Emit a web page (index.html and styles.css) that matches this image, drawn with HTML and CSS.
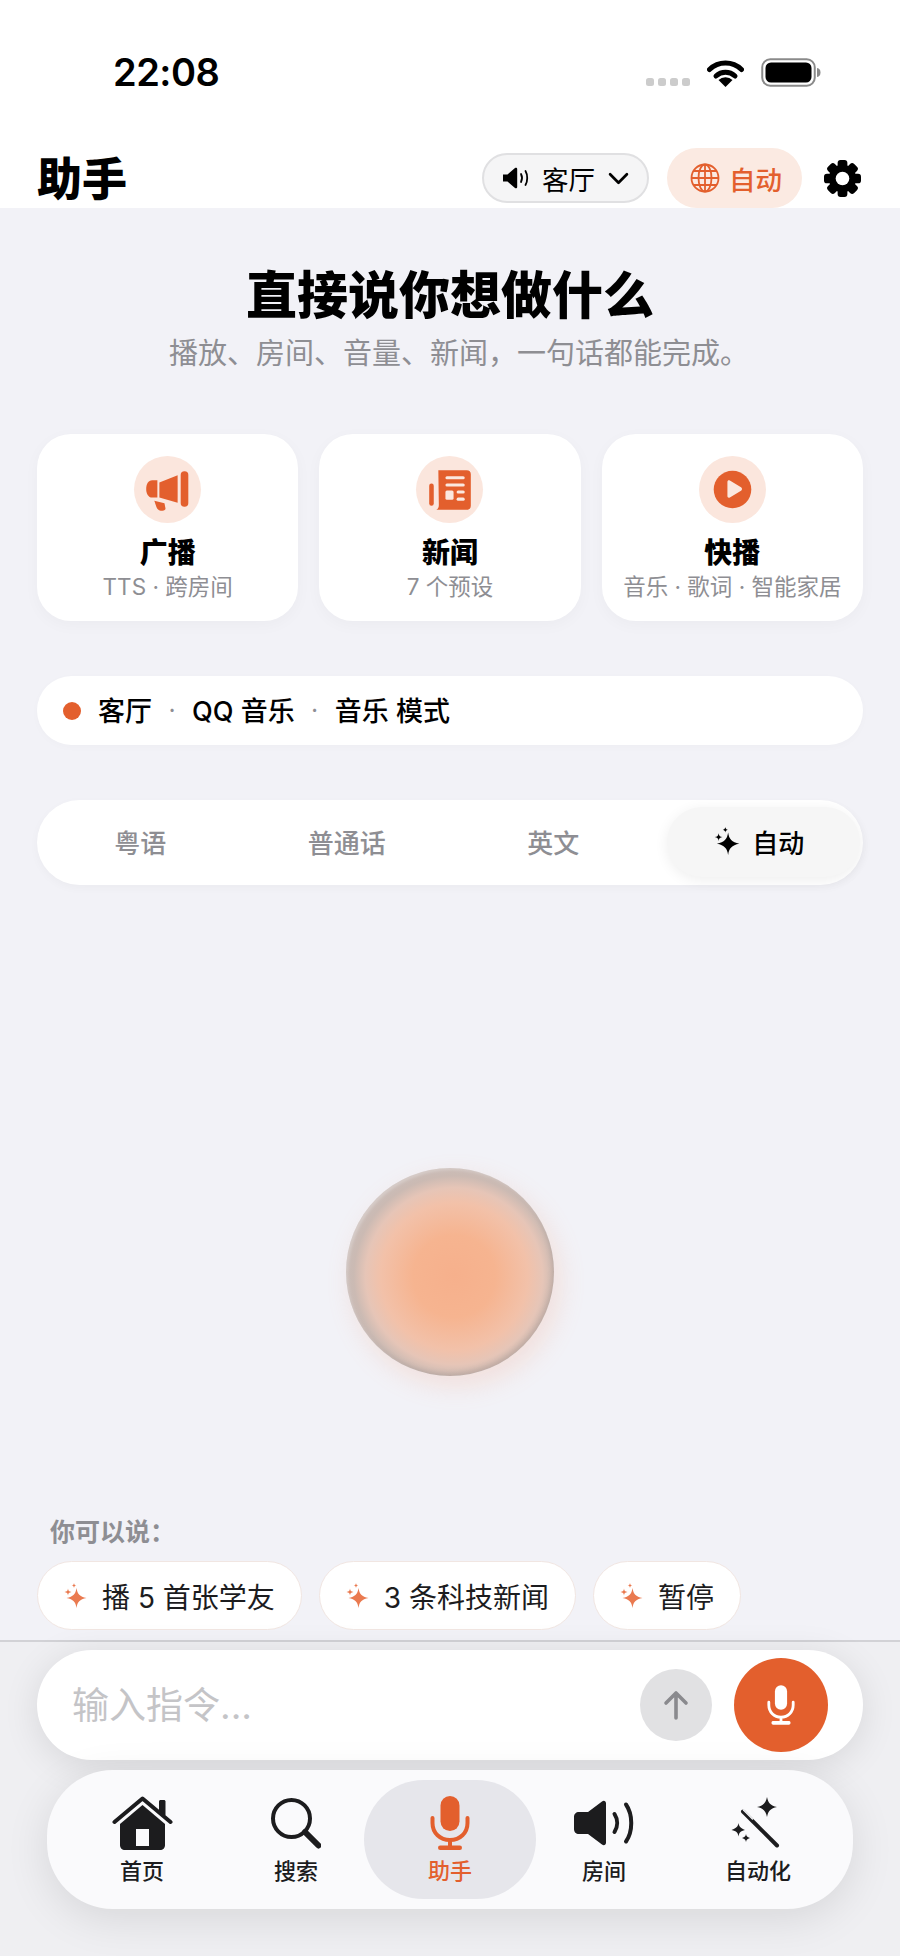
FILE: index.html
```html
<!DOCTYPE html>
<html lang="zh">
<head>
    <meta charset="utf-8">
    <title>助手</title>
    <link rel="stylesheet" href="styles.css">
</head>
<body>
<svg width="0" height="0" class="defs">
    <symbol id="spark" viewBox="0 0 23 25">
        <path d="M12.500 5c.9 6 3.200 8.700 10 10-6.800 1.300-9.100 4-10 10-.9-6-3.200-8.700-10-10 6.800-1.300 9.100-4 10-10z"/>
        <path d="M4 5.500c.3 2.200 1 3 3.500 3.500-2.500.5-3.200 1.300-3.500 3.500-.3-2.200-1-3-3.500-3.500 2.500-.5 3.200-1.300 3.500-3.500z"/>
        <path d="M10 0c.2 1.500.7 2.100 2.300 2.500-1.600.4-2.100 1-2.300 2.500-.2-1.500-.7-2.100-2.300-2.500 1.600-.4 2.100-1 2.300-2.500z"/>
    </symbol>
</svg>
<div class="page">
    <div class="top">
        <div class="status">
            <span class="time">22:08</span>
            <div class="status-icons">
                <span class="dots"><i></i><i></i><i></i><i></i></span>
                <svg class="wifi" viewBox="0 0 37 29">
                    <path d="M2.500 11.500a23 23 0 0 1 32 0" fill="none" stroke="#000" stroke-width="5" stroke-linecap="round"/>
                    <path d="M9 18a14 14 0 0 1 19 0" fill="none" stroke="#000" stroke-width="5" stroke-linecap="round"/>
                    <path d="M18.500 29l-7-7a10 10 0 0 1 14 0z"/>
                </svg>
                <svg class="battery" viewBox="0 0 60 29">
                    <rect x="1.250" y="1.250" width="52.500" height="26.500" rx="8" fill="none" stroke="#8a8a8a" stroke-width="2"/>
                    <rect x="4.500" y="4.500" width="46" height="20" rx="5.500"/>
                    <path d="M56 10c2.500.6 3.500 2 3.500 4.500S58.500 18.400 56 19z" fill="#8a8a8a"/>
                </svg>
            </div>
        </div>
        <header class="header">
            <h1 class="title">助手</h1>
            <button class="room-btn">
                <svg class="room-speaker" viewBox="0 0 28 24">
                    <path d="M1 8.500h4.500L13 2c1-.8 2.200-.2 2.200 1v18c0 1.200-1.200 1.800-2.200 1l-7.500-6.500H1z"/>
                    <path d="M19 8c1.300 2.500 1.300 5.500 0 8M23.500 5c2.300 4 2.300 10 0 14" fill="none" stroke="#000" stroke-width="1.800" stroke-linecap="round"/>
                </svg>
                <span>客厅</span>
                <svg class="chevron" viewBox="0 0 20 12"><path d="M2 2l8 8 8-8" fill="none" stroke="#000" stroke-width="2.600" stroke-linecap="round" stroke-linejoin="round"/></svg>
            </button>
            <button class="lang-btn">
                <svg class="globe" viewBox="0 0 30 30" fill="none" stroke="#e35f2d" stroke-width="1.800">
                    <circle cx="15" cy="15" r="13.500"/>
                    <ellipse cx="15" cy="15" rx="6.500" ry="13.500"/>
                    <path d="M15 1.500v27M1.500 15h27M3.500 8h23M3.500 22h23"/>
                </svg>
                <span>自动</span>
            </button>
            <svg class="gear" viewBox="0 0 38 38">
                <g fill="#000">
                    <rect x="14" y="0" width="10" height="38" rx="3"/>
                    <rect x="14" y="0" width="10" height="38" rx="3" transform="rotate(45 19 19)"/>
                    <rect x="14" y="0" width="10" height="38" rx="3" transform="rotate(90 19 19)"/>
                    <rect x="14" y="0" width="10" height="38" rx="3" transform="rotate(135 19 19)"/>
                </g>
                <circle cx="19" cy="19" r="10.500" fill="none" stroke="#000" stroke-width="7"/>
                <circle cx="19" cy="19" r="7" fill="#fff"/>
            </svg>
        </header>
    </div>

    <main class="main">
        <h2 class="headline">直接说你想做什么</h2>
        <p class="subline">播放、房间、音量、新闻，一句话都能完成。</p>

        <div class="cards">
            <div class="card">
                <span class="card-icon">
                    <svg viewBox="0 0 66 66" fill="#e35f2d">
                        <path d="M23 24v17h-5c-4 0-6-4-6-8.500s2-8.500 6-8.500z"/>
                        <path d="M25 26l18-7v27l-18-5z"/>
                        <rect x="46" y="15" width="7.500" height="35" rx="3.700"/>
                        <path d="M20 44l10 2.500 1 5c.2 1.500-1 2.500-3 2.500-3 0-5-1-6-4z"/>
                    </svg>
                </span>
                <b>广播</b>
                <small>TTS · 跨房间</small>
            </div>
            <div class="card">
                <span class="card-icon">
                    <svg viewBox="0 0 66 66" fill="#e35f2d">
                        <rect x="13" y="27" width="4.500" height="22" rx="2.200"/>
                        <path d="M22 14h28c2.500 0 4 1.500 4 4v31c0 2.500-1.500 4-4 4H20c2-1 2.500-2.500 2.500-5z"/>
                        <g fill="#fbe8df">
                            <rect x="29" y="20" width="19" height="3" rx="1.500"/>
                            <rect x="29" y="27" width="19" height="3" rx="1.500"/>
                            <rect x="29" y="34" width="8" height="9" rx="1.500"/>
                            <rect x="40" y="34" width="8" height="3" rx="1.500"/>
                            <rect x="40" y="41" width="8" height="3" rx="1.500"/>
                        </g>
                    </svg>
                </span>
                <b>新闻</b>
                <small>7 个预设</small>
            </div>
            <div class="card">
                <span class="card-icon">
                    <svg viewBox="0 0 66 66">
                        <circle cx="33" cy="33" r="18.500" fill="#e35f2d"/>
                        <path d="M28 25.500c0-1.500 1.200-2 2.400-1.300l11 6.700c1.300.8 1.300 2.600 0 3.400l-11 6.500c-1.200.7-2.400.2-2.400-1.300z" fill="#fbe8df"/>
                    </svg>
                </span>
                <b>快播</b>
                <small>音乐 · 歌词 · 智能家居</small>
            </div>
        </div>

        <div class="now">
            <span class="now-dot"></span>
            <span>客厅</span><i>·</i><span>QQ 音乐</span><i>·</i><span>音乐 模式</span>
        </div>

        <div class="tabs">
            <span class="tab">粤语</span>
            <span class="tab">普通话</span>
            <span class="tab">英文</span>
            <span class="tab tab-on">
                <svg class="tab-spark" viewBox="0 0 23 25"><use href="#spark"/></svg>
                自动
            </span>
        </div>

        <div class="orb"></div>

        <p class="hint">你可以说：</p>
        <div class="chips">
            <span class="chip"><svg viewBox="0 0 23 25"><use href="#spark"/></svg>播 5 首张学友</span>
            <span class="chip"><svg viewBox="0 0 23 25"><use href="#spark"/></svg>3 条科技新闻</span>
            <span class="chip"><svg viewBox="0 0 23 25"><use href="#spark"/></svg>暂停</span>
        </div>
    </main>

    <footer class="footer">
        <div class="input-bar">
            <span class="placeholder">输入指令...</span>
            <button class="send">
                <svg viewBox="0 0 28 32" fill="none" stroke="#8a8a8e" stroke-width="3.600" stroke-linecap="round" stroke-linejoin="round"><path d="M14 29V4M4 14L14 4l10 10"/></svg>
            </button>
            <button class="mic">
                <svg viewBox="0 0 32 44" fill="#fff">
                    <rect x="9.500" y="1" width="13" height="26" rx="6.500"/>
                    <path d="M3 19v3c0 7.500 5.500 13 13 13s13-5.500 13-13v-3" fill="none" stroke="#fff" stroke-width="3" stroke-linecap="round"/>
                    <rect x="14.500" y="34" width="3" height="6"/>
                    <rect x="6" y="39" width="20" height="4" rx="1.500"/>
                </svg>
            </button>
        </div>

        <nav class="nav">
            <a class="nav-item">
                <svg class="ic-home" viewBox="0 0 61 54">
                    <path d="M47 5.500c0-1 .8-1.500 1.500-1.500h3.500c.8 0 1.500.6 1.500 1.500V19H47z" fill="#1c1c1e"/>
                    <path d="M8 28L30.500 9 53 28v21c0 3-2 5-5 5H13c-3 0-5-2-5-5z" fill="#1c1c1e"/>
                    <rect x="24" y="33" width="13" height="17" fill="#fafafc"/>
                    <path d="M2.500 26L30.500 2.500 58.500 26" fill="none" stroke="#1c1c1e" stroke-width="4" stroke-linecap="round" stroke-linejoin="round"/>
                </svg>
                <span>首页</span>
            </a>
            <a class="nav-item">
                <svg class="ic-search" viewBox="0 0 50 50" fill="none" stroke="#1c1c1e">
                    <circle cx="20.500" cy="20.500" r="18.500" stroke-width="4"/>
                    <path d="M34 34l13.500 13.500" stroke-width="6" stroke-linecap="round"/>
                </svg>
                <span>搜索</span>
            </a>
            <a class="nav-item nav-on">
                <svg class="ic-mic" viewBox="0 0 40 54" fill="#e35f2d">
                    <rect x="10.500" y="0" width="19" height="35" rx="9.500"/>
                    <path d="M2.500 22v5c0 10 7.500 17 17.500 17s17.500-7 17.500-17v-5" fill="none" stroke="#e35f2d" stroke-width="4" stroke-linecap="round"/>
                    <rect x="18" y="43" width="4" height="7"/>
                    <rect x="8" y="49.500" width="24" height="4.500" rx="2.200"/>
                </svg>
                <span>助手</span>
            </a>
            <a class="nav-item">
                <svg class="ic-speaker" viewBox="0 0 60 46" fill="#1c1c1e">
                    <path d="M5 12h9L28 1.500c1.800-1.500 4-.5 4 2v39c0 2.500-2.200 3.500-4 2L14 34H5c-3 0-5-2-5-5V17c0-3 2-5 5-5z"/>
                    <path d="M40.500 14c3.500 5.500 3.500 12.500 0 18M52 4.500c7 10 7 27 0 37" fill="none" stroke="#1c1c1e" stroke-width="4" stroke-linecap="round"/>
                </svg>
                <span>房间</span>
            </a>
            <a class="nav-item">
                <svg class="ic-wand" viewBox="0 0 50 52" fill="#1c1c1e">
                    <path d="M12 14.500l34 34" fill="none" stroke="#1c1c1e" stroke-width="4" stroke-linecap="round"/>
                    <path d="M12.500 13l9 9" fill="none" stroke="#fafafc" stroke-width="1.400" stroke-linecap="round"/>
                    <path d="M36 0c1.200 6 3.500 8.500 10 10-6.500 1.500-8.800 4-10 10-1.200-6-3.500-8.500-10-10 6.500-1.500 8.800-4 10-10z"/>
                    <path d="M7.500 26c.6 3.500 1.800 4.700 6.500 7-4.700 1-5.900 2.700-6.500 6.500-.6-3.800-1.800-5.500-7-6.500 5.200-2.300 6.400-3.500 7-7z"/>
                    <path d="M15 37c.4 2.200 1.200 3 4 4-2.800 1-3.600 1.800-4 4-.4-2.200-1.200-3-4-4 2.800-1 3.600-1.800 4-4z"/>
                </svg>
                <span>自动化</span>
            </a>
        </nav>
    </footer>
</div>
</body>
</html>
```

FILE: styles.css
```css
* {
    box-sizing: border-box;
}

body {
    margin: 0;
    background-color: #f2f2f7;
    font-family: Inter, "Noto Sans CJK SC", sans-serif;
    color: #000;
}

button {
    font-family: inherit;
    border: none;
    padding: 0;
}

.defs {
    position: absolute;
}

.page {
    display: flex;
    flex-direction: column;
    height: 1956px;
    overflow: hidden;
}

/* top white area */
.top {
    background-color: #fff;
    height: 208px;
}

.status {
    display: flex;
    align-items: center;
    justify-content: space-between;
    height: 148px;
    padding: 0 79px 4px 113px;
}

.time {
    font-size: 38px;
    font-weight: 600;
    letter-spacing: -0.5px;
}

.status-icons {
    display: flex;
    align-items: flex-end;
    gap: 17px;
}

.dots {
    display: flex;
    gap: 4px;
    margin-bottom: 1px;
}

.dots i {
    width: 8px;
    height: 8px;
    border-radius: 2.5px;
    background-color: #ccc;
}

.wifi {
    width: 37px;
    height: 29px;
}

.battery {
    width: 60px;
    height: 29px;
}

.header {
    display: flex;
    align-items: center;
    height: 60px;
    padding: 0 39px 0 37px;
}

.title {
    margin: 3px auto 0 0;
    font-size: 45px;
    line-height: 60px;
    font-weight: 800;
}

.room-btn {
    display: flex;
    align-items: center;
    justify-content: center;
    gap: 12px;
    width: 167px;
    height: 50px;
    border: 2px solid #e0e0e2;
    border-radius: 25px;
    background-color: #f5f5f6;
    color: #000;
    font-size: 26.5px;
}

.room-speaker {
    width: 28px;
    height: 24px;
}

.chevron {
    width: 21px;
    height: 13px;
    margin-left: 1px;
}

.lang-btn {
    display: flex;
    align-items: center;
    justify-content: center;
    gap: 9px;
    width: 135px;
    height: 60px;
    margin-left: 18px;
    padding-left: 3px;
    border-radius: 30px;
    background-color: #fbeae2;
    color: #e35f2d;
    font-size: 26.5px;
    font-weight: 500;
}

.globe {
    width: 30px;
    height: 30px;
}

.gear {
    width: 37px;
    height: 37px;
    margin-left: 22px;
}

/* main column */
.main {
    flex: 1;
    display: flex;
    flex-direction: column;
    padding: 0 37px 10px;
}

.headline {
    margin: 58px 0 0;
    font-size: 51px;
    line-height: 60px;
    font-weight: 800;
    text-align: center;
}

.subline {
    margin: 10px 0 0;
    padding-left: 18px;
    font-size: 29px;
    line-height: 36px;
    color: #8e8e93;
    text-align: center;
}

.cards {
    display: grid;
    grid-template-columns: repeat(3, 1fr);
    gap: 21px;
    margin-top: 62px;
}

.card {
    display: flex;
    flex-direction: column;
    align-items: center;
    height: 187px;
    padding-top: 22px;
    border-radius: 34px;
    background-color: #fff;
    box-shadow: 0 4px 16px rgba(0, 0, 0, 0.03);
}

.card-icon {
    width: 67px;
    height: 67px;
    border-radius: 50%;
    background-color: #fbe6dd;
}

.card-icon svg {
    display: block;
    width: 67px;
    height: 67px;
}

.card b {
    margin-top: 12px;
    font-size: 28px;
    line-height: 36px;
    font-weight: 900;
}

.card small {
    margin-top: 1px;
    font-size: 22.5px;
    line-height: 30px;
    color: #8e8e93;
}

.now {
    display: flex;
    align-items: center;
    height: 69px;
    margin-top: 55px;
    padding: 0 0 2px 26px;
    border-radius: 35px;
    background-color: #fff;
    box-shadow: 0 2px 8px rgba(0, 0, 0, 0.02);
    font-size: 27px;
    font-weight: 500;
}

.now-dot {
    width: 18px;
    height: 18px;
    margin: 2px 17px 0 0;
    border-radius: 50%;
    background-color: #e35f2d;
}

.now i {
    width: 40px;
    color: #8e8e93;
    font-style: normal;
    font-size: 22px;
    text-align: center;
}

.tabs {
    display: grid;
    grid-template-columns: repeat(4, 1fr);
    align-items: center;
    height: 85px;
    margin-top: 55px;
    border-radius: 43px;
    background-color: #fff;
    box-shadow: 0 3px 10px rgba(0, 0, 0, 0.03);
}

.tab {
    display: flex;
    align-items: center;
    justify-content: center;
    height: 70px;
    padding-bottom: 2px;
    border-radius: 35px;
    color: #8e8e93;
    font-size: 26px;
    font-weight: 500;
}

.tab-on {
    gap: 12px;
    margin: 0 3px 1px 10px;
    padding-right: 8px;
    background-color: #f6f6f6;
    box-shadow: 0 3px 14px rgba(0, 0, 0, 0.07);
    color: #000;
}

.tab-spark {
    width: 26px;
    height: 28px;
    fill: #000;
}

.orb {
    align-self: center;
    width: 208px;
    height: 208px;
    margin-top: 283px;
    border-radius: 50%;
    background: radial-gradient(circle 108px at 52% 52%, #f6b08c 0, #f6b490 38%, #f2c1a9 68%, #e6c5b7 82%, #cbbab3 93%, #cabcb7 100%);
    box-shadow: inset 2px 2px 3px rgba(255, 255, 255, 0.25), inset -2px -3px 4px rgba(130, 110, 105, 0.2), 6px 10px 26px rgba(245, 150, 110, 0.2);
}

.hint {
    margin: auto 0 0;
    padding-left: 13px;
    font-size: 25px;
    line-height: 30px;
    font-weight: 700;
    color: #8e8e93;
}

.chips {
    display: flex;
    gap: 17px;
    margin-top: 14px;
}

.chip {
    display: flex;
    align-items: center;
    gap: 15px;
    height: 69px;
    padding: 0 26px 0 26px;
    border: 1px solid #f1e6e2;
    border-radius: 35px;
    background-color: #fff;
    font-size: 28px;
    color: #1c1c1e;
}

.chip svg {
    width: 23px;
    height: 25px;
    fill: #ea7a50;
}

/* bottom bars */
.footer {
    height: 316px;
    padding-top: 8px;
    border-top: 2px solid #d2d2d6;
    background-color: #efeff2;
}

.input-bar {
    display: flex;
    align-items: center;
    height: 110px;
    margin: 0 37px;
    padding: 0 35px;
    border-radius: 55px;
    background-color: #fff;
    box-shadow: 0 6px 36px rgba(0, 0, 0, 0.1);
}

.placeholder {
    margin-right: auto;
    padding-bottom: 4px;
    font-size: 37px;
    color: #c4c4c7;
}

.send {
    display: flex;
    align-items: center;
    justify-content: center;
    width: 72px;
    height: 72px;
    border-radius: 50%;
    background-color: #e1e1e3;
}

.send svg {
    width: 28px;
    height: 32px;
}

.mic {
    display: flex;
    align-items: center;
    justify-content: center;
    width: 94px;
    height: 94px;
    margin-left: 22px;
    border-radius: 50%;
    background-color: #e35f2d;
}

.mic svg {
    width: 30px;
    height: 42px;
}

.nav {
    display: flex;
    align-items: center;
    height: 139px;
    margin: 10px 47px 0;
    padding: 0 18px;
    border-radius: 66px;
    background-color: #fafafc;
    box-shadow: 0 10px 44px rgba(0, 0, 0, 0.1);
}

.nav-item {
    flex: 0 0 154px;
    display: flex;
    flex-direction: column;
    align-items: center;
    height: 119px;
    padding-top: 16px;
    font-size: 22px;
    line-height: 28px;
    font-weight: 500;
    color: #1c1c1e;
}

.nav-item svg {
    height: 54px;
    margin-bottom: 7px;
}

.nav-on {
    flex-basis: 172px;
    margin: 0 -9px;
    border-radius: 60px;
    background-color: #e6e6eb;
    color: #e35f2d;
}

.ic-home {
    width: 61px;
}

.ic-search {
    width: 50px;
}

.ic-mic {
    width: 40px;
}

.ic-speaker {
    width: 60px;
}

.ic-wand {
    width: 50px;
    margin-right: 4px;
}
```
